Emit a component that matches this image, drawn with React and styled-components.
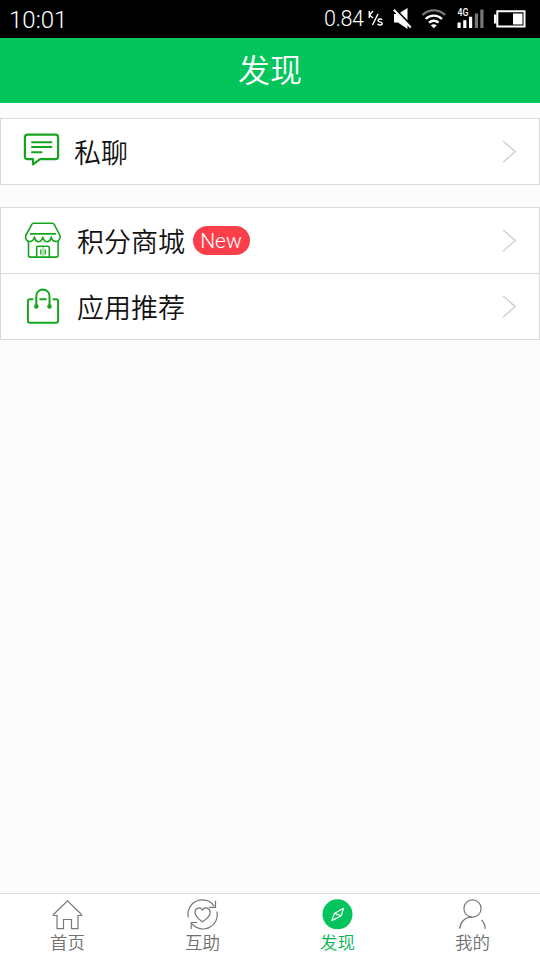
import styled, { createGlobalStyle } from 'styled-components';

const GlobalStyle = createGlobalStyle`
  body {
    margin: 0;
    background: #fcfcfc;
    font-family: Roboto, 'Noto Sans CJK SC', sans-serif;
    font-weight: 300;
  }

  svg {
    display: block;
    flex: none;
  }
`;

const Screen = styled.div`
  display: flex;
  flex-direction: column;
  height: 960px;
  overflow: hidden;
`;

const StatusBar = styled.div`
  display: flex;
  align-items: center;
  justify-content: space-between;
  box-sizing: border-box;
  height: 38px;
  padding: 0 14px 0 9px;
  background: #000;
  color: #fff;
`;

const Clock = styled.span`
  padding-top: 2px;
  font-size: 24px;
  line-height: 36px;
`;

const StatusItems = styled.div`
  display: flex;
  align-items: center;
`;

const Speed = styled.span`
  width: 42px;
  font-size: 21.5px;
  letter-spacing: -0.3px;
  line-height: 36px;
`;

const Header = styled.header`
  height: 65px;
  background: #04c45c;
  color: #fff;
  font-size: 32px;
  font-weight: 350;
  line-height: 66px;
  text-align: center;
`;

const Content = styled.main`
  display: flex;
  flex: 1;
  flex-direction: column;
  gap: 22px;
  padding-top: 15px;
`;

const Card = styled.section`
  border: 1px solid #d9d9d9;
  background: #fff;
`;

const Row = styled.div`
  display: flex;
  align-items: center;
  height: 65px;
  padding: 0 20px 0 21px;

  & + & {
    border-top: 1px solid #d9d9d9;
  }
`;

const Label = styled.span`
  margin-left: ${({ $gap }) => $gap}px;
  padding-top: 5px;
  color: #111;
  font-size: 27px;
  font-weight: 350;
  line-height: 40px;
`;

const Badge = styled.span`
  width: 57px;
  height: 29px;
  margin-left: 7.5px;
  border-radius: 15px;
  background: #fb3f4a;
  color: #fff;
  font-size: 21px;
  line-height: 31px;
  text-align: center;
`;

const Arrow = styled.svg`
  margin-left: auto;
`;

const TabBar = styled.nav`
  display: grid;
  grid-template-columns: repeat(4, 1fr);
  box-sizing: border-box;
  height: 67px;
  padding-top: 5px;
  border-top: 1px solid #dedede;
  background: #fff;
`;

const Tab = styled.div`
  display: flex;
  flex-direction: column;
  align-items: center;
  color: ${({ $active }) => ($active ? '#07b456' : '#707070')};
  font-size: 17.5px;
  font-weight: 350;
  line-height: 24px;
`;

const StatusIcons = () => (
  <svg width='160' height='38' viewBox='366 0 160 38' fill='#fff'>
    <g fill='none' stroke='#fff' strokeWidth='1.4'>
      <path d='M369.3 11v7M373 11l-3.5 4 3.5 3M378 14l-5.5 11' />
      <path d='M382 19.7c-.4-1-4-1.2-4 .7s4.2 1 4.2 3-4 2-4.6.3' />
    </g>
    <path d='M394 14h4l9.5-6v21l-9.5-6.5h-4z' />
    <path d='M395.5 9.5l17 17.7' stroke='#000' strokeWidth='2.4' />
    <path d='M393.8 9.8l17 17.7' stroke='#fff' strokeWidth='2' />
    <g fill='none' strokeWidth='2.4'>
      <path d='M422.5 15a16 16 0 0 1 22.5 0' stroke='#777' />
      <path d='M425.7 19a11.4 11.4 0 0 1 16.2 0' stroke='#fff' />
      <path d='M429 22.7a7 7 0 0 1 9.6 0' stroke='#fff' />
    </g>
    <path d='M430.8 25.3q3-2 6 0l-3 3z' />
    <text x='457.5' y='16.4' fontSize='10.5' fontWeight='500' textLength='11' lengthAdjust='spacingAndGlyphs'>
      4G
    </text>
    <path d='M457.5 22.5h3.2V28h-3.2zM463.2 20.2h3.2V28h-3.2zM469 16.8h3.2V28H469z' />
    <path d='M474.8 13.5h3.2V28h-3.2zM480.3 9.5h3.2V28h-3.2z' fill='#777' />
    <path d='M497.3 11.2h27.2v15.2h-27.2z' fill='none' stroke='#fff' strokeWidth='2' />
    <path d='M494 14.5h2.5v9H494zM513 13.5h9.5v11H513z' />
  </svg>
);

const LineIcon = ({ children }) => (
  <svg
    width='40'
    height='40'
    fill='none'
    stroke='#16a51e'
    strokeWidth='2'
    strokeLinecap='round'
    strokeLinejoin='round'
  >
    {children}
  </svg>
);

const ChatIcon = () => (
  <LineIcon>
    <path
      d='M5.5 2.6h28a2.6 2.6 0 0 1 2.6 2.6v19.3a2.6 2.6 0 0 1-2.6 2.6H18l-7 5.3v-5.3H5.5a2.6 2.6 0 0 1-2.6-2.6V5.2a2.6 2.6 0 0 1 2.6-2.6z'
      strokeWidth='2.2'
    />
    <path d='M10 10.2h19.5M10 15h19.5M10 20.2h9.5' />
  </LineIcon>
);

const StoreIcon = () => (
  <LineIcon>
    <g strokeWidth='1.6'>
      <path d='M11.5 2.3h19c.8 0 1.3.4 1.7 1.1L38 14.5c.5 3-1 5.9-4 6-2.5 0-4.2-1.5-4.8-4.5-1.2 6.2-6.8 6.2-8.4.2-1.8 6-7 6-8.3-.2-.7 3-2.6 4.5-5 4.5-3-.1-4.5-3-3.7-6L9.8 3.4c.4-.7.9-1.1 1.7-1.1z' />
      <path d='M8.5 12.9h25M6.5 20.5v13.8a1.8 1.8 0 0 0 1.8 1.8h26a1.8 1.8 0 0 0 1.8-1.8V20.5' />
      <path d='M14.7 36V26.6a1.3 1.3 0 0 1 1.3-1.3h10a1.3 1.3 0 0 1 1.3 1.3V36' />
      <path d='M18.8 29v4M23.2 29v4' strokeWidth='1.3' />
      <path d='M21 26v9.5' strokeWidth='0.7' />
    </g>
  </LineIcon>
);

const BagIcon = () => (
  <LineIcon>
    <path d='M10.5 12.2H7.6a1.7 1.7 0 0 0-1.7 1.7v20a1.8 1.8 0 0 0 1.8 1.8h26.6a1.8 1.8 0 0 0 1.8-1.8v-20a1.7 1.7 0 0 0-1.7-1.7h-2.9M18.2 12.2h5.6' />
    <path d='M14.3 19.5V9a6.6 6.6 0 0 1 13.2 0v10.5' />
    <circle cx='14.3' cy='19.5' r='1.3' fill='#16a51e' />
    <circle cx='27.5' cy='19.5' r='1.3' fill='#16a51e' />
  </LineIcon>
);

const Chevron = () => (
  <Arrow width='18' height='24' fill='none' stroke='#cfcfcf' strokeWidth='1.4'>
    <path d='M2 1L14.3 11.6 2 22.2' />
  </Arrow>
);

const TabIcon = ({ children }) => (
  <svg width='32' height='32' viewBox='0.5 0 32 32' fill='none' stroke='#777' strokeWidth='1.2'>
    {children}
  </svg>
);

const HomeIcon = () => (
  <TabIcon>
    <path d='M2 15.5L16 1.8l14 13.7v1h-3.5v13.2H20V20.5h-8v9.2H5.5V16.5H2z' />
  </TabIcon>
);

const HelpIcon = () => (
  <TabIcon>
    <path d='M1.9 18.5A14.3 14.3 0 0 1 27.7 7.2M29 1.8v6.5h-6.3M30.4 12.5A14.3 14.3 0 0 1 5.2 24.5M4.7 30v-6.5h6' />
    <path d='M16 22.8c-3.2-2.4-7.5-5.2-7.5-9.4 0-4.5 5.3-6.2 7.5-2.4 2.2-3.8 7.7-2.1 7.7 2.4 0 4.2-4.4 7-7.7 9.4z' />
  </TabIcon>
);

const DiscoverIcon = () => (
  <TabIcon>
    <circle cx='16' cy='15.3' r='15' fill='#04c45c' stroke='none' />
    <path d='M22 9.3l-2.3 7.5-9.4 4.8 2.5-7.2zM12.8 14.4l6.9 2.4' stroke='#fff' strokeLinejoin='round' />
  </TabIcon>
);

const MineIcon = () => (
  <TabIcon>
    <circle cx='16' cy='9.5' r='8.6' />
    <path d='M3.2 29.7c.5-6.5 5-11.6 12.3-11.6M25 21c2.3 2.4 3.6 5 3.8 8.7' />
  </TabIcon>
);

const SECTIONS = [
  [{ label: '私聊', Icon: ChatIcon, gap: 12 }],
  [
    { label: '积分商城', Icon: StoreIcon, gap: 15, badge: 'New' },
    { label: '应用推荐', Icon: BagIcon, gap: 15 },
  ],
];

const TABS = [
  { label: '首页', Icon: HomeIcon },
  { label: '互助', Icon: HelpIcon },
  { label: '发现', Icon: DiscoverIcon, active: true },
  { label: '我的', Icon: MineIcon },
];

const App = () => (
  <>
    <GlobalStyle />
    <Screen>
      <StatusBar>
        <Clock>10:01</Clock>
        <StatusItems>
          <Speed>0.84</Speed>
          <StatusIcons />
        </StatusItems>
      </StatusBar>
      <Header>发现</Header>
      <Content>
        {SECTIONS.map((rows) => (
          <Card key={rows[0].label}>
            {rows.map(({ label, Icon, gap, badge }) => (
              <Row key={label}>
                <Icon />
                <Label $gap={gap}>{label}</Label>
                {badge && <Badge>{badge}</Badge>}
                <Chevron />
              </Row>
            ))}
          </Card>
        ))}
      </Content>
      <TabBar>
        {TABS.map(({ label, Icon, active }) => (
          <Tab key={label} $active={active}>
            <Icon />
            {label}
          </Tab>
        ))}
      </TabBar>
    </Screen>
  </>
);

export default App;
